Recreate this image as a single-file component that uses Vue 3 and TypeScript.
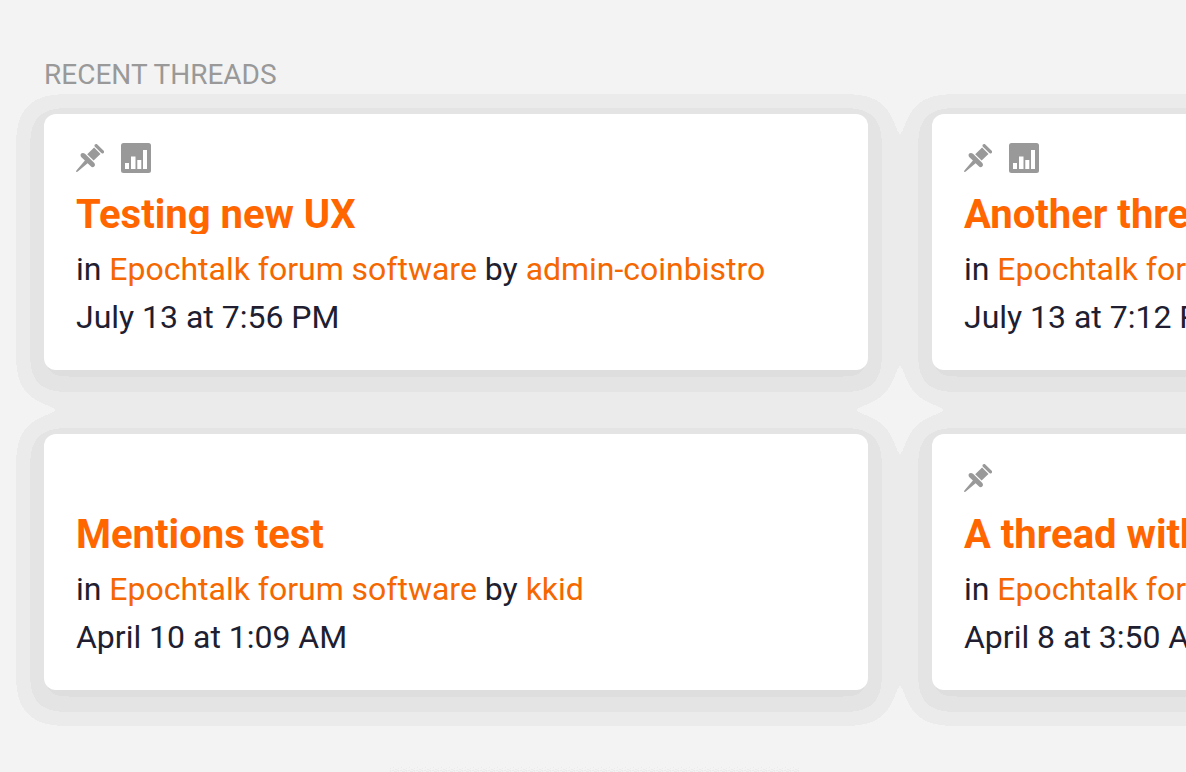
<script setup lang="ts">
interface Thread {
  title: string
  author: string
  date: string
  pinned: boolean
  poll: boolean
}
const threads: Thread[] = [
  { title: 'Testing new UX', author: 'admin-coinbistro', date: 'July 13 at 7:56 PM', pinned: true, poll: true },
  { title: 'Another thread', author: 'admin-coinbistro', date: 'July 13 at 7:12 PM', pinned: true, poll: true },
  { title: 'Mentions test', author: 'kkid', date: 'April 10 at 1:09 AM', pinned: false, poll: false },
  { title: 'A thread with poll', author: 'kkid', date: 'April 8 at 3:50 AM', pinned: true, poll: false },
]

// Opacity steps of the banded card shadow
const shadowSteps = [
  ...Array(6).fill(0),
  ...Array(17).fill(0.033),
  ...Array(18).fill(0.066),
  ...Array(5).fill(0.09),
].join(' ')
</script>

<template>
  <main class="page">
    <svg class="shadows" width="1186" height="772" viewBox="0 0 1186 772" aria-hidden="true">
      <defs>
        <filter id="bands" filterUnits="userSpaceOnUse" x="-80" y="0" width="1960" height="820" color-interpolation-filters="sRGB">
          <feGaussianBlur stdDeviation="13" />
          <feComponentTransfer>
            <feFuncA type="discrete" :tableValues="shadowSteps" />
          </feComponentTransfer>
        </filter>
        <pattern id="dither" width="8" height="7" patternUnits="userSpaceOnUse" y="765">
          <path d="M1 2h1v1H1zM6 3h1v1H6zM3 4h2v1H3zM0 5h2v1H0zM5 5h2v1H5zM2 6h3v1H2zM6 6h1v1H6z" fill="#ebebeb" />
        </pattern>
      </defs>
      <g filter="url(#bands)">
        <rect x="30" y="108" width="852" height="284" rx="20" />
        <rect x="918" y="108" width="852" height="284" rx="20" />
        <rect x="30" y="428" width="852" height="284" rx="20" />
        <rect x="918" y="428" width="852" height="284" rx="20" />
      </g>
      <rect x="390" y="765" width="410" height="7" fill="url(#dither)" />
    </svg>
    <h2 class="heading">RECENT THREADS</h2>
    <div class="grid">
      <article v-for="t in threads" :key="t.title" class="card">
        <div class="icons">
          <svg v-if="t.pinned" class="pin" viewBox="0 0 28 28">
            <path d="M18.9.6C19.6-.1 20.6-.1 21.3.5L27.7 6.8C28.3 7.4 28.3 8.4 27.6 9 26.9 9.7 26 9.7 25.3 9.1L18.9 2.8C18.3 2.2 18.3 1.2 18.9.6ZM18.1 3.6 24.5 10 17.6 16.6 11.2 10.2ZM5.2 9.6C6.3 8.6 7.9 8.8 9 9.8L18.1 18.7C19.2 19.8 19.3 21.4 18.2 22.5 17.2 23.5 15.8 23.3 14.8 22.3L11.6 19.2 1.5 27.7 0 28 .4 26.5 8.9 16.5 5.4 13.2C4.4 12.2 4.2 10.6 5.2 9.6Z" />
          </svg>
          <svg v-if="t.poll" class="poll" viewBox="0 0 30 30">
            <rect width="30" height="30" rx="2.5" />
            <path class="bars" d="M4 20h4v6H4zM10 13.5h4.5V26H10zM16.3 17h4v9h-4zM22 7h4v19h-4z" />
          </svg>
        </div>
        <h3 class="title">{{ t.title }}</h3>
        <p class="meta">in <a>Epochtalk forum software</a> by <a>{{ t.author }}</a></p>
        <p class="meta">{{ t.date }}</p>
      </article>
    </div>
  </main>
</template>

<style>
body {
  background: #f3f3f3;
  overflow: hidden;
}
</style>

<style scoped>
.page {
  position: relative;
  box-sizing: border-box;
  height: 772px;
  overflow: hidden;
  padding: 59px 0 0 44px;
  font-family: Roboto, sans-serif;
  color: #201e30;
}
.shadows {
  position: absolute;
  inset: 0;
}
.heading {
  position: relative;
  margin: 0 0 23px;
  font-size: 28px;
  line-height: 32px;
  font-weight: 400;
  color: #999;
}
.grid {
  position: relative;
  display: grid;
  grid-template-columns: 824px 824px;
  grid-auto-rows: 256px;
  gap: 64px;
}
.card {
  box-sizing: border-box;
  padding: 28px 32px;
  border-radius: 12px;
  background: #fff;
}
.icons {
  display: flex;
  align-items: center;
  gap: 17px;
  height: 32px;
}
.pin {
  width: 28px;
  height: 28px;
  fill: #999;
}
.poll {
  width: 30px;
  height: 30px;
  fill: #999;
}
.bars {
  fill: #fff;
}
.title {
  box-sizing: border-box;
  height: 40px;
  margin: 20px 0 11px;
  padding-top: 1px;
  overflow: hidden;
  font-size: 40px;
  line-height: 40px;
  font-weight: 700;
  color: #ff6600;
  white-space: nowrap;
}
.meta {
  margin: 0;
  font-size: 32px;
  line-height: 48px;
  letter-spacing: -0.012px;
  white-space: nowrap;
}
.meta a {
  color: #f56700;
}
</style>
